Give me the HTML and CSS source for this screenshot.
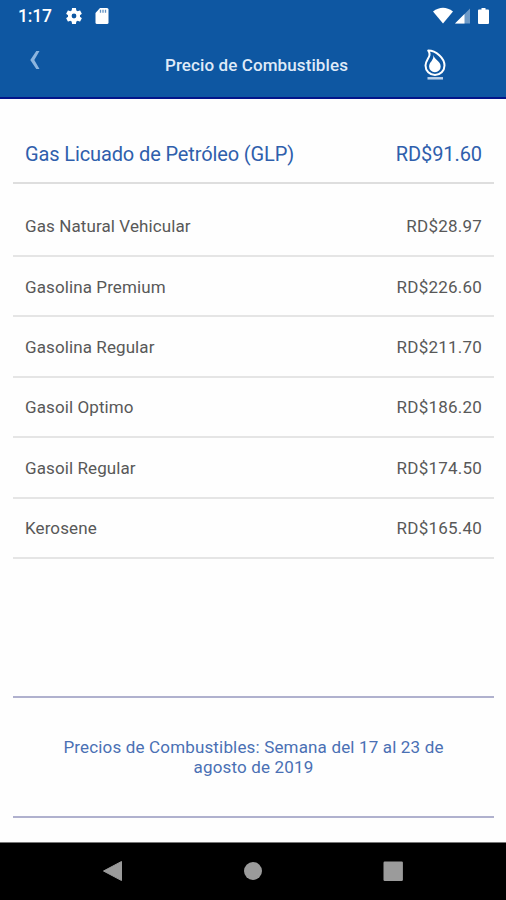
FILE: index.html
```html
<!DOCTYPE html>
<html lang="es">
<head>
<meta charset="utf-8">
<title>Precio de Combustibles</title>
<link rel="stylesheet" href="styles.css">
</head>
<body>
<div class="screen">
  <header class="header">
    <div class="status">
      <span class="clock">1:17</span>
      <svg class="gear" width="16" height="16" viewBox="2 2 20 20"><path fill="#fff" d="M19.43 12.98c.04-.32.07-.64.07-.98s-.03-.66-.07-.98l2.11-1.65c.19-.15.24-.42.12-.64l-2-3.46c-.12-.22-.39-.3-.61-.22l-2.49 1c-.52-.4-1.08-.73-1.69-.98l-.38-2.65C14.46 2.18 14.25 2 14 2h-4c-.25 0-.46.18-.49.42l-.38 2.65c-.61.25-1.17.59-1.69.98l-2.49-1c-.23-.09-.49 0-.61.22l-2 3.46c-.13.22-.07.49.12.64l2.11 1.65c-.04.32-.07.65-.07.98s.03.66.07.98l-2.11 1.65c-.19.15-.24.42-.12.64l2 3.46c.12.22.39.3.61.22l2.49-1c.52.4 1.08.73 1.69.98l.38 2.65c.03.24.24.42.49.42h4c.25 0 .46-.18.49-.42l.38-2.65c.61-.25 1.17-.59 1.69-.98l2.49 1c.23.09.49 0 .61-.22l2-3.46c.12-.22.07-.49-.12-.64zM12 15a3 3 0 1 1 0-6 3 3 0 0 1 0 6z"/></svg>
      <svg class="card" width="14" height="16" viewBox="0 0 14 16"><path fill="#fff" d="M5 0h7a1.5 1.5 0 0 1 1.5 1.5v13A1.5 1.5 0 0 1 12 16H2a1.5 1.5 0 0 1-1.500-1.500V5z"/><path stroke="#0e57a2" stroke-width="1.300" d="M5.500 1.800v3M8 1.800v3M10.500 1.800v3" opacity=".65"/></svg>
      <svg class="signals" width="57" height="18" viewBox="0 0 57 18"><path fill="#fff" d="M0 4.500Q10 -3 20 4.500L10 16.500z"/><path fill="#fff" opacity=".4" d="M37 1.500v15H22z"/><path fill="#fff" d="M31.500 7v9.500H22z"/><path fill="#fff" d="M48.500 1h4v1.500H55a1 1 0 0 1 1 1V16a1 1 0 0 1-1 1h-9a1 1 0 0 1-1-1V3.500a1 1 0 0 1 1-1h2.500z"/></svg>
    </div>
    <div class="toolbar">
      <svg class="back" width="10" height="18" viewBox="0 0 10 18"><path fill="#8db5df" d="M6.300 0H9.500L4.300 9l5.200 9H6.300L.3 9z"/></svg>
      <h1 class="title">Precio de Combustibles</h1>
      <svg class="flame" width="22" height="32" viewBox="0 0 22 32"><path fill="none" stroke="#fff" stroke-width="2" stroke-linejoin="round" d="M4.200 1.500C12 1.500 20.500 9 20.500 16.500A9.500 9.500 0 0 1 11 26 9.500 9.500 0 0 1 1.500 16.500C1.500 10 8.500 7.500 4.200 1.500z"/><path fill="#fff" d="M9.300 6c1 4.500 7.400 6 7.400 11.500a5.800 5.800 0 0 1-11.600 0c0-4.500 5-6 4.200-11.500z"/><path stroke="#bcd1ea" stroke-width="2.500" d="M3.500 29.300h15.500"/></svg>
    </div>
  </header>
  <main class="content">
    <ul class="prices">
      <li class="price featured"><span class="fuel">Gas Licuado de Petróleo (GLP)</span><span class="amount">RD$91.60</span></li>
      <li class="price first"><span class="fuel">Gas Natural Vehicular</span><span class="amount">RD$28.97</span></li>
      <li class="price"><span class="fuel">Gasolina Premium</span><span class="amount">RD$226.60</span></li>
      <li class="price"><span class="fuel">Gasolina Regular</span><span class="amount">RD$211.70</span></li>
      <li class="price"><span class="fuel">Gasoil Optimo</span><span class="amount">RD$186.20</span></li>
      <li class="price"><span class="fuel">Gasoil Regular</span><span class="amount">RD$174.50</span></li>
      <li class="price"><span class="fuel">Kerosene</span><span class="amount">RD$165.40</span></li>
    </ul>
    <p class="week">Precios de Combustibles: Semana del 17 al 23 de<br>agosto de 2019</p>
  </main>
  <nav class="navbar">
    <svg width="20" height="22" viewBox="0 0 20 22"><path fill="#9b9b9b" stroke="#9b9b9b" stroke-linejoin="round" d="M.5 11L18.500 1.500v19z"/></svg>
    <svg width="20" height="22" viewBox="0 0 20 22"><circle cx="10" cy="11" r="9" fill="#9b9b9b"/></svg>
    <svg width="20" height="22" viewBox="0 0 20 22"><rect x=".5" y="1.500" width="19.400" height="19.400" rx="1.200" fill="#9b9b9b"/></svg>
  </nav>
</div>
</body>
</html>
```
FILE: styles.css
```css
* { box-sizing: border-box; }
body {
  margin: 0;
  font-family: Roboto, "Liberation Sans", sans-serif;
  background: #fefefe;
}
.screen {
  display: flex;
  flex-direction: column;
  width: 506px;
  height: 900px;
}
.header {
  height: 99px;
  background: #0e57a2;
  border-bottom: 2px solid #03158a;
  color: #fff;
}
.status {
  display: flex;
  align-items: center;
  height: 32px;
  padding: 0 16px 0 18px;
}
.clock {
  width: 48px;
  font-size: 17.500px;
  font-weight: 500;
  letter-spacing: -0.2px;
}
.card { margin-left: 13px; }
.signals { margin-left: auto; }
.toolbar {
  display: grid;
  grid-template-columns: 10px 1fr 22px;
  padding: 17px 60px 0 30px;
}
.back { margin-top: 2px; }
.title {
  margin: 5px 0 0;
  padding-left: 49px;
  font-size: 17px;
  font-weight: 500;
  letter-spacing: 0.1px;
  line-height: 22px;
  text-align: center;
  color: #dfeaf8;
}
.content {
  display: flex;
  flex: 1;
  flex-direction: column;
  padding: 26px 12px 24px 13px;
}
.prices {
  margin: 0;
  padding: 0;
  list-style: none;
}
.price {
  display: flex;
  align-items: center;
  justify-content: space-between;
  height: 60.400px;
  padding: 1px 12px 0;
  border-bottom: 2px solid #e5e5e5;
  font-size: 17px;
  letter-spacing: 0.1px;
  color: #585858;
}
.amount { letter-spacing: 0.22px; }
.price.featured {
  height: 59px;
  border-color: #dedede;
  font-size: 20px;
  letter-spacing: -0.12px;
  color: #2f5fac;
}
.featured .amount { letter-spacing: -0.08px; }
.price.first {
  height: 73px;
  padding-top: 13px;
}
.week {
  display: flex;
  align-items: center;
  justify-content: center;
  height: 122px;
  margin: auto 0 0;
  border: solid #b0b1ce;
  border-width: 2px 0;
  font-size: 17px;
  letter-spacing: 0.16px;
  line-height: 20.500px;
  text-align: center;
  color: #4a70b4;
}
.navbar {
  display: flex;
  justify-content: space-between;
  height: 58px;
  padding: 17px 103px 0;
  border-top: 1px solid #777;
  background: #000;
}
```
